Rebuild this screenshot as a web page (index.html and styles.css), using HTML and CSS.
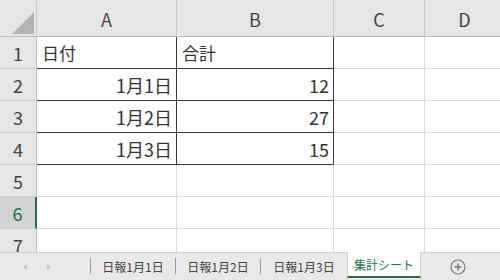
FILE: index.html
```html
<!DOCTYPE html>
<html>
<head>
    <link rel="stylesheet" href="styles.css">
</head>
<body>
    <div class="sheet">
        <div class="grid">
            <div class="corner">
                <svg width="37" height="37" viewBox="0 0 37 37"><polygon points="34,12 34,34 12,34" fill="#b4b4b4"/></svg>
            </div>
            <div class="col-head">A</div>
            <div class="col-head">B</div>
            <div class="col-head">C</div>
            <div class="col-head">D</div>

            <div class="row-head">1</div>
            <div class="cell boxed col-a">日付</div>
            <div class="cell boxed col-b">合計</div>
            <div class="cell"></div>
            <div class="cell"></div>

            <div class="row-head">2</div>
            <div class="cell boxed col-a num">1月1日</div>
            <div class="cell boxed col-b num">12</div>
            <div class="cell"></div>
            <div class="cell"></div>

            <div class="row-head">3</div>
            <div class="cell boxed col-a num">1月2日</div>
            <div class="cell boxed col-b num">27</div>
            <div class="cell"></div>
            <div class="cell"></div>

            <div class="row-head">4</div>
            <div class="cell boxed col-a num">1月3日</div>
            <div class="cell boxed col-b num">15</div>
            <div class="cell"></div>
            <div class="cell"></div>

            <div class="row-head">5</div>
            <div class="cell"></div>
            <div class="cell"></div>
            <div class="cell"></div>
            <div class="cell"></div>

            <div class="row-head selected">6</div>
            <div class="cell"></div>
            <div class="cell"></div>
            <div class="cell"></div>
            <div class="cell"></div>

            <div class="row-head">7</div>
            <div class="cell"></div>
            <div class="cell"></div>
            <div class="cell"></div>
            <div class="cell"></div>
        </div>
    </div>

    <div class="tab-bar">
        <div class="nav">
            <span class="arrow left"></span>
            <span class="arrow right"></span>
        </div>
        <div class="tab">日報1月1日</div>
        <div class="tab">日報1月2日</div>
        <div class="tab wide">日報1月3日</div>
        <div class="tab active">集計シート</div>
        <div class="add">
            <svg width="16" height="16" viewBox="0 0 16 16">
                <circle cx="8" cy="8" r="7" fill="none" stroke="#777" stroke-width="1.2"/>
                <path d="M8 4.5v7M4.5 8h7" stroke="#777" stroke-width="1.4"/>
            </svg>
        </div>
    </div>
</body>
</html>
```

FILE: styles.css
```css
body {
    margin: 0;
    width: 500px;
    height: 280px;
    overflow: hidden;
    background: #ffffff;
    font-family: "Noto Sans CJK JP", "Noto Sans", sans-serif;
    color: #333;
}

.sheet {
    height: 252px;
    overflow: hidden;
}

.grid {
    display: grid;
    grid-template-columns: 37px 140px 157px 91px 80px;
    grid-template-rows: 37px repeat(7, 32px);
}

.grid > div {
    box-sizing: border-box;
}

.corner {
    background: #e6e6e6;
    border-right: 1px solid #c8c8c8;
    border-bottom: 1px solid #bdbdbd;
}

.corner svg {
    display: block;
}

.col-head {
    display: flex;
    align-items: center;
    justify-content: center;
    background: #e6e6e6;
    border-right: 1px solid #c8c8c8;
    border-bottom: 1px solid #bdbdbd;
    font-size: 18px;
    color: #444;
    padding-top: 2px;
}

.row-head {
    display: flex;
    align-items: center;
    justify-content: center;
    background: #e6e6e6;
    border-right: 1px solid #bdbdbd;
    border-bottom: 1px solid #d0d0d0;
    font-size: 18px;
    color: #444;
}

.row-head.selected {
    background: #d2d2d2;
    color: #217346;
    border-right: 2px solid #217346;
}

.cell {
    display: flex;
    align-items: center;
    border-right: 1px solid #dadada;
    border-bottom: 1px solid #dadada;
    font-size: 17px;
    padding: 0 5px;
    white-space: nowrap;
}

.cell.num {
    justify-content: flex-end;
    padding-right: 4px;
    font-size: 18px;
}

.cell.boxed {
    border-bottom: 1px solid #3a3a3a;
}

.cell.col-a,
.cell.col-b {
    border-right: 1px solid #3a3a3a;
}

.tab-bar {
    display: flex;
    align-items: stretch;
    height: 28px;
    background: #e9e9e9;
    border-top: 1px solid #cfcfcf;
    box-sizing: border-box;
    font-size: 12px;
    color: #444;
}

.nav {
    display: flex;
    align-items: center;
    gap: 20px;
    width: 90px;
    padding-left: 23px;
    box-sizing: border-box;
}

.arrow {
    width: 0;
    height: 0;
    border-top: 3px solid transparent;
    border-bottom: 3px solid transparent;
}

.arrow.left {
    border-right: 4px solid #c4c4c4;
}

.arrow.right {
    border-left: 4px solid #c4c4c4;
}

.tab {
    display: flex;
    align-items: center;
    justify-content: center;
    width: 85px;
    border-left: 1px solid #9a9a9a;
    margin: 5px 0 6px;
    box-sizing: border-box;
}

.tab.wide {
    width: 87px;
}

.tab.active {
    width: 74px;
    margin: -1px 0 2px;
    background: #ffffff;
    color: #217346;
    border-left: 1px solid #c8c8c8;
    border-right: 1px solid #c8c8c8;
    border-bottom: 2px solid #217346;
}

.add {
    display: flex;
    align-items: center;
    justify-content: center;
    width: 74px;
}

.add svg {
    display: block;
}
```
